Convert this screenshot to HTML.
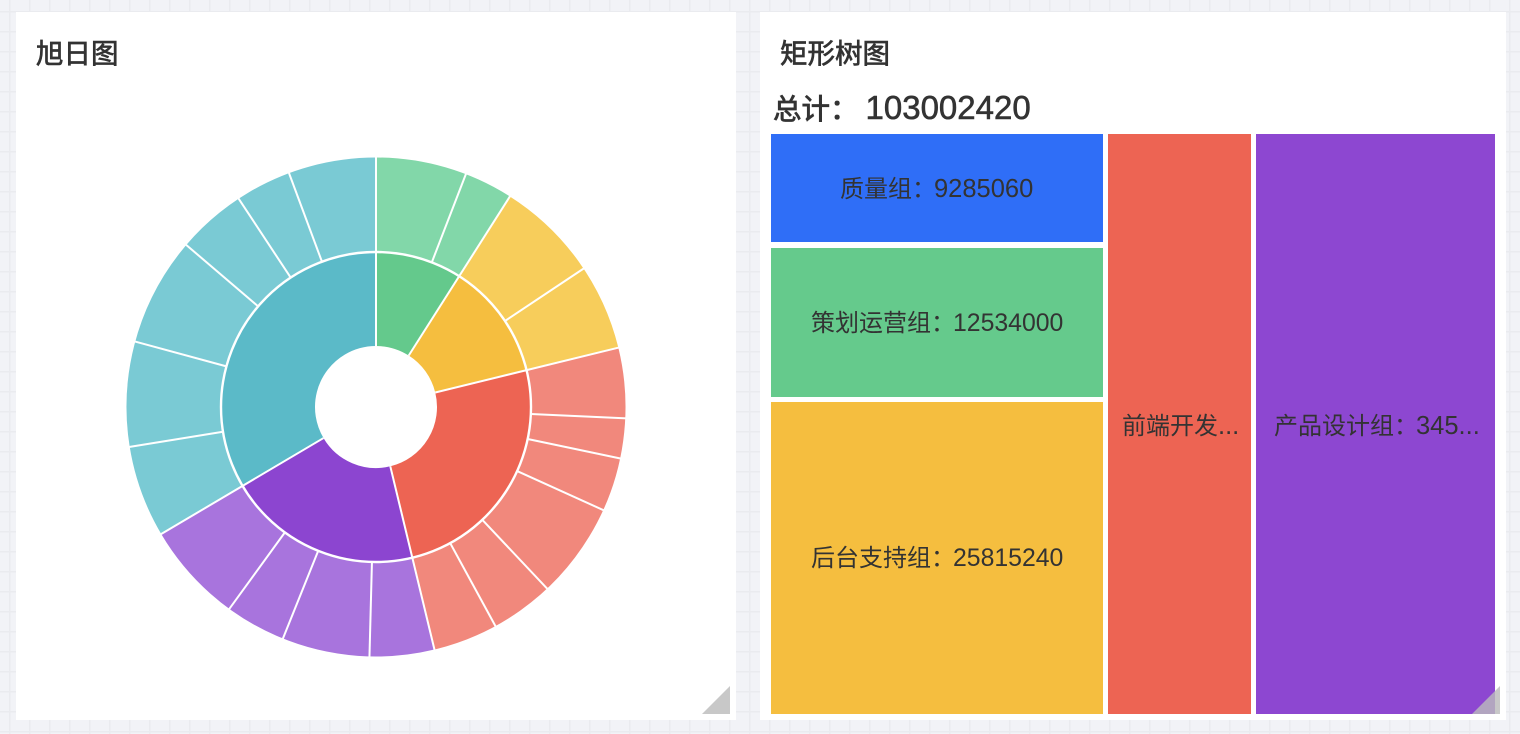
<!DOCTYPE html>
<html lang="zh">
<head>
<meta charset="utf-8">
<title>旭日图 矩形树图</title>
<style>
html,body{margin:0;padding:0;width:1520px;height:734px;overflow:hidden}
body{position:relative;font-family:"Liberation Sans","Noto Sans CJK SC",sans-serif;color:#333;
background-color:#f2f3f7;
background-image:linear-gradient(to right,#eaebef 0,#eaebef 1.5px,transparent 1.5px),linear-gradient(to bottom,#eaebef 0,#eaebef 1.5px,transparent 1.5px);
background-size:20px 20px;background-position:9px 11px}
.card{position:absolute;top:12px;height:708px;background:#fff}
.t{position:absolute;white-space:nowrap;line-height:40px;height:40px}
.h{font-size:27.5px;top:34px;-webkit-text-stroke:.7px #333}
.b{position:absolute}
.l{font-size:24px;color:#333}
.l span{font-size:25.5px;margin-left:-2px}
.l span.e{font-size:24.8px}
.tri{position:absolute;width:28px;height:28px;top:686px;background:rgba(187,187,187,.81);clip-path:polygon(100% 0,100% 100%,0 100%)}
svg{position:absolute;left:0;top:0}
</style>
</head>
<body>
<div class="card" style="left:16px;width:720px"></div>
<div class="card" style="left:760px;width:746px"></div>

<div class="t h" style="left:36px">旭日图</div>
<div class="t h" style="left:780px">矩形树图</div>
<div class="t" style="left:773px;top:88px;font-size:28.5px;-webkit-text-stroke:.8px #333">总计：<span style="font-size:33px;margin-left:7px;-webkit-text-stroke:.6px #333">103002420</span></div>

<svg width="760" height="734" viewBox="0 0 760 734">
  <g fill="none" transform="translate(376 407)">
    <!-- inner ring -->
    <g stroke-width="94">
      <circle r="108" pathLength="360" stroke="#64c98c" stroke-dasharray="32.45 360" transform="rotate(-90)"/>
      <circle r="108" pathLength="360" stroke="#f5be3f" stroke-dasharray="43.8 360" transform="rotate(-57.55)"/>
      <circle r="108" pathLength="360" stroke="#ed6453" stroke-dasharray="90.2 360" transform="rotate(-13.75)"/>
      <circle r="108" pathLength="360" stroke="#8c45d0" stroke-dasharray="72.95 360" transform="rotate(76.45)"/>
      <circle r="108" pathLength="360" stroke="#5bbac8" stroke-dasharray="120.6 360" transform="rotate(149.4)"/>
    </g>
    <!-- outer ring -->
    <g stroke-width="94.5">
      <circle r="202.25" pathLength="360" stroke="#82d7a9" stroke-dasharray="32.45 360" transform="rotate(-90)"/>
      <circle r="202.25" pathLength="360" stroke="#f7cd5b" stroke-dasharray="43.8 360" transform="rotate(-57.55)"/>
      <circle r="202.25" pathLength="360" stroke="#f1887c" stroke-dasharray="90.2 360" transform="rotate(-13.75)"/>
      <circle r="202.25" pathLength="360" stroke="#a874dd" stroke-dasharray="72.95 360" transform="rotate(76.45)"/>
      <circle r="202.25" pathLength="360" stroke="#7acad4" stroke-dasharray="120.6 360" transform="rotate(149.4)"/>
    </g>
    <circle r="155" stroke="#fff" stroke-width="2.4"/>
    <!-- full-length separators -->
    <g stroke="#fff" stroke-width="2">
      <line y1="-61" y2="-251" transform="rotate(0)"/>
      <line y1="-61" y2="-251" transform="rotate(32.45)"/>
      <line y1="-61" y2="-251" transform="rotate(76.25)"/>
      <line y1="-61" y2="-251" transform="rotate(166.45)"/>
      <line y1="-61" y2="-251" transform="rotate(239.4)"/>
    </g>
    <!-- outer separators -->
    <g stroke="#fff" stroke-width="2">
      <line y1="-155" y2="-251" transform="rotate(21.1)"/>
      <line y1="-155" y2="-251" transform="rotate(56.3)"/>
      <line y1="-155" y2="-251" transform="rotate(92.6)"/>
      <line y1="-155" y2="-251" transform="rotate(101.9)"/>
      <line y1="-155" y2="-251" transform="rotate(114.4)"/>
      <line y1="-155" y2="-251" transform="rotate(136.7)"/>
      <line y1="-155" y2="-251" transform="rotate(151.4)"/>
      <line y1="-155" y2="-251" transform="rotate(181.5)"/>
      <line y1="-155" y2="-251" transform="rotate(201.9)"/>
      <line y1="-155" y2="-251" transform="rotate(216)"/>
      <line y1="-155" y2="-251" transform="rotate(260.8)"/>
      <line y1="-155" y2="-251" transform="rotate(285.2)"/>
      <line y1="-155" y2="-251" transform="rotate(310.5)"/>
      <line y1="-155" y2="-251" transform="rotate(326.6)"/>
      <line y1="-155" y2="-251" transform="rotate(339.6)"/>
    </g>
  </g>
</svg>

<div class="b" style="left:771px;top:134px;width:332px;height:108px;background:#2f6ef7"></div>
<div class="b" style="left:771px;top:248px;width:332px;height:149px;background:#65ca8c"></div>
<div class="b" style="left:771px;top:402px;width:332px;height:312px;background:#f5be3f"></div>
<div class="b" style="left:1108px;top:134px;width:143px;height:580px;background:#ed6453"></div>
<div class="b" style="left:1256px;top:134px;width:239px;height:580px;background:#8d47d1"></div>

<div class="t l" style="left:840px;top:169px">质量组：<span>9285060</span></div>
<div class="t l" style="left:811px;top:304px">策划运营组：<span class="e">12534000</span></div>
<div class="t l" style="left:811px;top:539px">后台支持组：<span class="e">25815240</span></div>
<div class="t l" style="left:1122px;top:406px">前端开发<span style="margin-left:0">...</span></div>
<div class="t l" style="left:1274px;top:406px">产品设计组：<span>345...</span></div>

<div class="tri" style="left:702px"></div>
<div class="tri" style="left:1472px"></div>
</body>
</html>
